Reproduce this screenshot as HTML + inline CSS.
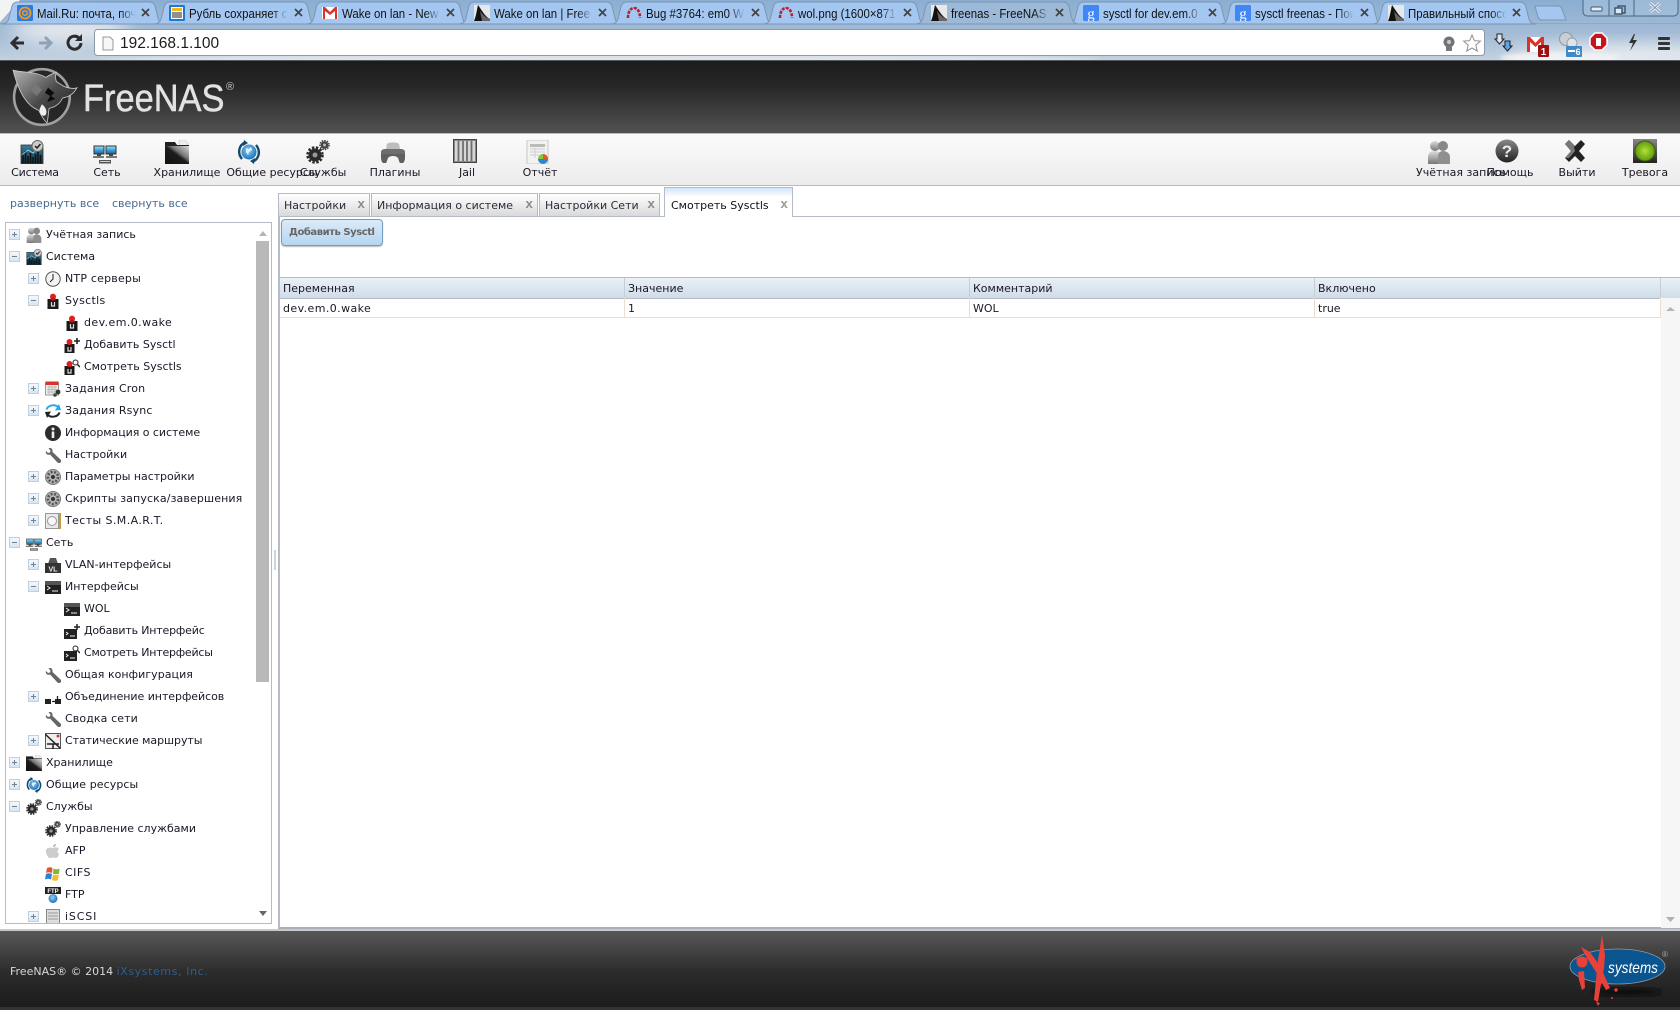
<!DOCTYPE html>
<html><head><meta charset="utf-8"><title>freenas - FreeNAS</title>
<style>
html,body{margin:0;padding:0;width:1680px;height:1010px;overflow:hidden;background:#fff;font-family:"DejaVu Sans","Liberation Sans",sans-serif;font-size:11px;color:#1c1626}
.a{position:absolute}
#hdr{position:absolute;left:0;top:61px;width:1680px;height:72px;background:linear-gradient(#1c1c1c,#272727 35%,#525252)}
#nav{position:absolute;left:0;top:133px;width:1680px;height:51px;background:linear-gradient(#fbfbfb,#ececec);border-top:1px solid #b5bcc7;border-bottom:1px solid #b5bcc7;box-sizing:content-box}
.ti{position:absolute;top:140px;width:24px;height:24px}
.tl{position:absolute;top:166px;line-height:14px;white-space:nowrap;transform:translateX(-50%)}
.t{position:absolute;top:5px;height:16px;font:13px/17px "Liberation Sans",sans-serif;color:#111;width:112px;overflow:hidden;white-space:nowrap;transform:scaleX(.88);transform-origin:0 0;-webkit-mask-image:linear-gradient(90deg,#000 84%,transparent);mask-image:linear-gradient(90deg,#000 84%,transparent)}
.fv{position:absolute;top:5px;width:16px;height:16px}
.cx{position:absolute;top:6px;width:13px;height:13px}
#tree{position:absolute;left:5px;top:222px;width:265px;height:700px;border:1px solid #b5bcc7;overflow:hidden;background:#fff}
.r{position:absolute;left:0;height:22px;line-height:22px;white-space:nowrap}
.r svg{position:absolute;top:3px;width:16px;height:16px}
.r span{position:absolute;top:0}
.r i{position:absolute;top:5px;width:11px;height:11px;box-sizing:border-box;border:1px solid #bfd0e0;background:linear-gradient(#f4f8fc,#d8e5f2)}
.r i:before{content:"";position:absolute;left:2px;top:4px;width:5px;height:1px;background:#6f8294}
.r i.p:after{content:"";position:absolute;left:4px;top:2px;width:1px;height:5px;background:#6f8294}
.l0 i{left:3px}.l0 svg{left:20px}.l0 span{left:40px}
.l1 i{left:22px}.l1 svg{left:39px}.l1 span{left:59px}
.l2 svg{left:58px}.l2 span{left:78px}
.tab{position:absolute;top:193px;height:23px;box-sizing:border-box;border:1px solid #b5bcc7;border-bottom:0;background:linear-gradient(#fff,#d9d9d9);line-height:23px;padding-left:5px;white-space:nowrap;color:#2b2b3a}
.tab b{position:absolute;right:4px;top:0;color:#8a8a8a;font:bold 13px/21px "Liberation Mono",monospace}
.th{position:absolute;top:278px;height:19px;line-height:21px;padding-left:3px;box-sizing:border-box;border-right:1px solid #c5cdd8}
.td{position:absolute;top:298px;height:19px;line-height:21px;padding-left:3px;box-sizing:border-box;border-right:1px solid #eadfce}
</style></head><body>

<svg width="0" height="0" style="position:absolute">
<defs>
<linearGradient id="gd" x1="0" y1="0" x2="0" y2="1"><stop offset="0" stop-color="#888"/><stop offset="1" stop-color="#222"/></linearGradient>
<linearGradient id="gg" x1="0" y1="0" x2="0" y2="1"><stop offset="0" stop-color="#ddd"/><stop offset="1" stop-color="#777"/></linearGradient>
<linearGradient id="gf" x1="0" y1="1" x2="1" y2="0"><stop offset="0" stop-color="#111"/><stop offset=".5" stop-color="#1d1d1d"/><stop offset=".62" stop-color="#777"/><stop offset="1" stop-color="#ddd"/></linearGradient>
<linearGradient id="gs" x1="0" y1="0" x2="0" y2="1"><stop offset="0" stop-color="#3d7d9a"/><stop offset="1" stop-color="#12303f"/></linearGradient>
<linearGradient id="gm" x1="0" y1="0" x2="0" y2="1"><stop offset="0" stop-color="#a5e3f8"/><stop offset=".5" stop-color="#3fa4dc"/><stop offset="1" stop-color="#1a5e90"/></linearGradient>
<linearGradient id="shk" x1="0" y1="0" x2="1" y2="1"><stop offset="0" stop-color="#b5b5b5"/><stop offset=".5" stop-color="#4a4a4a"/><stop offset="1" stop-color="#1c1c1c"/></linearGradient>
<radialGradient id="gb" cx=".45" cy=".4" r=".6"><stop offset="0" stop-color="#8fd0f5"/><stop offset="1" stop-color="#1d70b8"/></radialGradient>
<radialGradient id="ggr" cx=".5" cy=".5" r=".5"><stop offset="0" stop-color="#b4e234"/><stop offset="1" stop-color="#5c9a10"/></radialGradient>
<filter id="bl" x="-30%" y="-60%" width="160%" height="220%"><feGaussianBlur stdDeviation="9"/></filter>
<filter id="b2"><feGaussianBlur stdDeviation="2"/></filter>

<symbol id="sys" viewBox="0 0 24 24"><rect x="1" y="5" width="22" height="19" fill="url(#gs)" stroke="#333" stroke-width=".8"/><path d="M3 23V14M5.500 23V11M8 23V16M10.500 23V13M13 23V17M15.500 23V14M18 23V11M20.500 23V15" stroke="#111" stroke-width="1.500"/><path d="M2 15L8 10l5 3 5-4 4-2" stroke="#9fe0f5" stroke-width=".8" fill="none"/><circle cx="17.500" cy="6" r="5.500" fill="#ccc" stroke="#666"/><path d="M15 6l2 2 3.500-4" stroke="#222" stroke-width="1.500" fill="none"/></symbol>
<symbol id="net" viewBox="0 0 24 24"><rect x="1" y="6" width="10" height="8" fill="url(#gm)" stroke="#333"/><rect x="13" y="6" width="10" height="8" fill="url(#gm)" stroke="#333"/><rect x="4" y="14" width="4" height="2" fill="#444"/><rect x="16" y="14" width="4" height="2" fill="#444"/><rect x="0" y="16" width="11" height="2" fill="#777"/><rect x="13" y="16" width="11" height="2" fill="#777"/><rect x="6" y="20" width="12" height="3.500" fill="#555"/><rect x="7" y="21" width="10" height="1" fill="#ccc"/></symbol>
<symbol id="folder" viewBox="0 0 24 24"><path d="M14 0h6l3 3v6h-9z" fill="#eee" stroke="#bbb" stroke-width=".5"/><path d="M0 2h10l2 3h12v19H0z" fill="#222"/><path d="M0 6h24v18H0z" fill="url(#gf)"/></symbol>
<symbol id="share" viewBox="0 0 24 24"><circle cx="12" cy="12" r="7.500" fill="url(#gb)"/><path d="M9 8l3 1 2-2 1 3-3 2-1 3-2-3z" fill="#dff3fc"/><path d="M5 19C0 13 2 5 8 2.500" fill="none" stroke="#124a6d" stroke-width="2.400"/><path d="M19 5c5 6 3 14-3 16.500" fill="none" stroke="#124a6d" stroke-width="2.400"/><path d="M7 0l4 3-5 3zM17 24l-4-3 5-3z" fill="#124a6d"/></symbol>
<symbol id="gears" viewBox="0 0 24 24"><circle cx="9" cy="15" r="6.500" fill="#2a2a2a"/><circle cx="9" cy="15" r="7.500" fill="none" stroke="#2a2a2a" stroke-width="2.500" stroke-dasharray="2.400 1.600"/><circle cx="9" cy="15" r="2.500" fill="#999"/><circle cx="18.500" cy="5" r="3.800" fill="#444"/><circle cx="18.500" cy="5" r="4.500" fill="none" stroke="#444" stroke-width="1.600" stroke-dasharray="1.500 1.100"/><circle cx="18.500" cy="5" r="1.500" fill="#bbb"/></symbol>
<symbol id="plugin" viewBox="0 0 24 24"><path d="M6 4C7 2 17 2 18 4l1 5H5z" fill="#bdbdbd"/><path d="M0 12c0-3 4-3 5-3h14c1 0 5 0 5 3v3H0z" fill="#6e6e6e"/><path d="M0 14h24v3c0 4-1 5-2 6h-3c-1-1-1-3-2-5-1-1.500-3-2-5-2s-4 .5-5 2c-1 2-1 4-2 5H2c-1-1-2-2-2-6z" fill="#606060"/></symbol>
<symbol id="jail" viewBox="0 0 24 24"><rect x="0.500" y="0.500" width="23" height="23" fill="#888" stroke="#444"/><rect x="2" y="2" width="20" height="20" fill="#d6d6d6"/><path d="M5.500 2v20M10 2v20M14 2v20M18.500 2v20" stroke="#6e6e6e" stroke-width="1.800"/></symbol>
<symbol id="report" viewBox="0 0 24 24"><rect x="1" y="0" width="21" height="24" fill="#f2f2f2" stroke="#c8c8c8"/><rect x="4" y="4" width="15" height="3" fill="#bbb"/><path d="M4 9h15M4 12h15M4 15h9M9 8v10" stroke="#d0d0d0"/><circle cx="17" cy="19" r="5" fill="#2e86cf"/><path d="M17 19V14a5 5 0 0 1 5 5z" fill="#e25c2a"/><path d="M17 19l-5 0a5 5 0 0 1 5-5z" fill="#8fc43a"/></symbol>
<symbol id="user" viewBox="0 0 24 24"><circle cx="8" cy="6" r="5" fill="url(#gg)"/><path d="M1 24v-7c0-4 3-6 7-6s7 2 7 6v7z" fill="url(#gg)"/><circle cx="16" cy="6" r="5" fill="#888"/><path d="M11 24v-7c0-4 2-6 5-6s7 2 7 6v7z" fill="#8f8f8f"/></symbol>
<symbol id="help" viewBox="0 0 24 24"><circle cx="12" cy="12" r="11.500" fill="url(#gd)"/><text x="12" y="18" text-anchor="middle" font-family="Liberation Sans" font-weight="bold" font-size="17" fill="#eee">?</text></symbol>
<symbol id="xx" viewBox="0 0 24 24"><path d="M2 5l4-4 6 6 6-6 4 4-6 7 6 7-4 4-6-6-6 6-4-4 6-7z" fill="#222"/><path d="M2 5l4-4 6 6-1 1 1 4-6 7-4 0 6-7z" fill="#777"/></symbol>
<symbol id="alarm" viewBox="0 0 24 24"><rect x="0" y="0" width="24" height="24" fill="url(#gd)"/><circle cx="12" cy="12" r="10" fill="url(#ggr)" stroke="#3c5a10"/></symbol>
<symbol id="clock" viewBox="0 0 16 16"><circle cx="8" cy="8" r="7.200" fill="#f3f3f3" stroke="#555"/><path d="M8 3v5l-3 3" stroke="#222" fill="none"/></symbol>
<symbol id="sc" viewBox="0 0 16 16"><rect x="2.500" y="6" width="11" height="10" fill="#1a1a1a"/><circle cx="8" cy="3.600" r="3" fill="#e01f1f"/><rect x="5.500" y="5" width="5" height="2.500" fill="#c01515"/><path d="M6.500 9v4h3V9" fill="none" stroke="#ddd" stroke-width="1.200"/></symbol>
<symbol id="scadd" viewBox="0 0 16 16"><rect x="0.500" y="7" width="10" height="9" fill="#1a1a1a"/><circle cx="5.500" cy="5" r="3" fill="#e01f1f"/><path d="M4 10v4h3v-4" fill="none" stroke="#ddd" stroke-width="1.200"/><path d="M13 1v6M10 4h6" stroke="#222" stroke-width="1.600"/></symbol>
<symbol id="scv" viewBox="0 0 16 16"><rect x="0.500" y="7" width="10" height="9" fill="#1a1a1a"/><circle cx="5.500" cy="5" r="3" fill="#e01f1f"/><path d="M4 10v4h3v-4" fill="none" stroke="#ddd" stroke-width="1.200"/><circle cx="11.500" cy="3.500" r="2.500" fill="#fff" stroke="#222"/><path d="M13.500 5.500L16 8" stroke="#222" stroke-width="1.400"/></symbol>
<symbol id="cron" viewBox="0 0 16 16"><rect x="0.500" y="2" width="13" height="12" fill="#eee" stroke="#999"/><rect x="0.500" y="0.500" width="13" height="3.500" fill="#d8342a"/><path d="M2 6h10M2 8.500h10M2 11h10M4 5v8M7 5v8M10 5v8" stroke="#aaa" stroke-width=".7"/><circle cx="13" cy="11" r="2.400" fill="#333"/><circle cx="10" cy="14" r="1.800" fill="#444"/></symbol>
<symbol id="rsync" viewBox="0 0 16 16"><path d="M1.500 6.500C3 2 10 1 13 4" fill="none" stroke="#29a9e8" stroke-width="2"/><path d="M16 7l-6 .5L14 1z" fill="#29a9e8"/><path d="M14.500 9.500C13 14 6 15 3 12" fill="none" stroke="#222" stroke-width="2"/><path d="M0 9l6-.5L2 15z" fill="#222"/></symbol>
<symbol id="info" viewBox="0 0 16 16"><circle cx="8" cy="8" r="8" fill="#2c2c2c"/><circle cx="8" cy="4" r="1.500" fill="#eee"/><rect x="6.700" y="6.500" width="2.600" height="6.500" fill="#eee"/></symbol>
<symbol id="wr" viewBox="0 0 16 16"><path d="M1 4l2 2 2-.5.500-2L3.500 1.500C6 0 8 2 7.500 5L15.500 12.500a2 2 0 0 1-3 3L5 7.500C2.500 8.500 0 6.500 1 4z" fill="#666"/></symbol>
<symbol id="cg" viewBox="0 0 16 16"><circle cx="8" cy="8" r="7.500" fill="#b5b5b5" stroke="#777"/><circle cx="8" cy="8" r="5" fill="none" stroke="#555" stroke-width="2.600" stroke-dasharray="2 1.500"/><circle cx="8" cy="8" r="2" fill="#333"/></symbol>
<symbol id="smart" viewBox="0 0 16 16"><rect x="0.500" y="0.500" width="13" height="15" fill="#e8e8e8" stroke="#999"/><circle cx="7" cy="8" r="4.500" fill="#f8f8f8" stroke="#999"/><rect x="14" y="0" width="2" height="16" fill="#c79a3a"/></symbol>
<symbol id="vlan" viewBox="0 0 16 16"><path d="M3 7l2-6h6l2 6z" fill="#555"/><rect x="0" y="6" width="16" height="10" fill="#333"/><text x="8" y="14.500" text-anchor="middle" font-family="Liberation Sans" font-weight="bold" font-size="7" fill="#eee">VL</text></symbol>
<symbol id="term" viewBox="0 0 16 16"><rect x="0" y="2" width="16" height="13" fill="#222"/><rect x="0" y="2" width="16" height="4" fill="#555"/><path d="M2 7l3 2-3 2M7 12h6" stroke="#eee" fill="none"/></symbol>
<symbol id="tadd" viewBox="0 0 16 16"><rect x="0" y="6" width="13" height="10" fill="#222"/><path d="M2 9l2 1.500-2 1.500M6 13h5" stroke="#eee" fill="none"/><path d="M13 1v6M10 4h6" stroke="#222" stroke-width="1.500"/></symbol>
<symbol id="tv" viewBox="0 0 16 16"><rect x="0" y="6" width="13" height="10" fill="#222"/><path d="M2 9l2 1.500-2 1.500M6 13h5" stroke="#eee" fill="none"/><circle cx="11.500" cy="3.500" r="2.500" fill="#fff" stroke="#222"/><path d="M13.500 5.500L16 8" stroke="#222" stroke-width="1.400"/></symbol>
<symbol id="lagg" viewBox="0 0 16 16"><rect x="0" y="10" width="6" height="5" fill="#222"/><rect x="10" y="10" width="6" height="5" fill="#222"/><path d="M7 12.500h5M12.500 10V7" stroke="#222" stroke-width="1.300" fill="none"/></symbol>
<symbol id="route" viewBox="0 0 16 16"><rect x="0.500" y="0.500" width="15" height="15" fill="#eee" stroke="#555"/><path d="M0 1l15 14M2 11h12M8 11v5" stroke="#222" stroke-width="1.500"/><circle cx="13" cy="3" r="1.500" fill="#d33"/></symbol>
<symbol id="ap" viewBox="0 0 16 16"><path d="M8 5c2-1 5-1 6 1-2 1-2 4 0 5-1 3-2 4-3 4s-2-.5-3-.5-2 .5-3 .5c-2 0-4-4-4-7s3-4 7-3z" fill="#ccc"/><path d="M8 4c0-2 1-3 3-3 0 2-1 3-3 3z" fill="#bbb"/></symbol>
<symbol id="win" viewBox="0 0 16 16"><path d="M2 3c2-1 4-1 5.500 0L7 8C5 7 3 7 1 8z" fill="#e8542a"/><path d="M8.500 3.500c2 1 4 1 6 0L14 8.500c-2 1-4 1-6 0z" fill="#7fb82e"/><path d="M1 9c2-1 4-1 6 0L6 14.500c-2-1-4-1-6 0z" fill="#2a7fd6"/><path d="M8 9.500c2 1 4 1 6 0l-1 5.500c-2 1-4 1-6 0z" fill="#f4bb2a"/></symbol>
<symbol id="ftp" viewBox="0 0 16 16"><rect x="0" y="0" width="16" height="7" fill="#222"/><text x="8" y="6" text-anchor="middle" font-family="Liberation Sans" font-weight="bold" font-size="6" fill="#fff">FTP</text><circle cx="8" cy="11.500" r="4.500" fill="url(#gb)"/></symbol>
<symbol id="isc" viewBox="0 0 16 16"><rect x="1.500" y="0.500" width="13" height="15" fill="#ddd" stroke="#888"/><path d="M3 4h10M3 7h10M3 10h10" stroke="#999"/></symbol>
<symbol id="sh" viewBox="0 0 16 16"><rect width="16" height="16" fill="#e8e8e8"/><path d="M0 16C2 12 3 4 4 0c3 4 7 12 12 14v2z" fill="#111"/><path d="M6 6c2 3 6 7 10 8v2H8z" fill="#666"/></symbol>
<symbol id="red" viewBox="0 0 16 16"><path d="M2 13C2 6 5 3 8 3s6 3 6 10" fill="none" stroke="#b5222a" stroke-width="2.600" stroke-dasharray="3 1.200"/></symbol>
<symbol id="gl" viewBox="0 0 16 16"><rect width="16" height="16" rx="1.500" fill="#4285f4"/><text x="8" y="13.500" text-anchor="middle" font-family="Liberation Serif" font-size="15" fill="#fff">g</text></symbol>
<symbol id="close" viewBox="0 0 13 13"><path d="M3 3l7 7M10 3l-7 7" stroke="#444" stroke-width="1.800"/></symbol>
</defs></svg>

<!-- browser chrome -->
<svg class="a" style="left:0;top:0" width="1680" height="61">
<defs><linearGradient id="sky" x1="0" y1="0" x2="0" y2="1"><stop offset="0" stop-color="#8aaed2"/><stop offset=".6" stop-color="#a6bdd6"/><stop offset="1" stop-color="#c4d2e0"/></linearGradient></defs>
<rect width="1680" height="61" fill="url(#sky)"/>
<ellipse cx="70" cy="30" rx="60" ry="14" fill="#e6e9ee" filter="url(#bl)"/>
<ellipse cx="1620" cy="56" rx="110" ry="10" fill="#eef0f3" filter="url(#bl)"/>
<ellipse cx="1560" cy="58" rx="60" ry="6" fill="#f0f1f3" filter="url(#b2)"/>
<ellipse cx="600" cy="60" rx="500" ry="6" fill="#dfe4ea" filter="url(#b2)"/>
<path d="M0 0h20L0 22z" fill="#f2f3f5"/>
<rect y="23" width="1680" height="1" fill="#7f97ae" opacity=".5"/>
<g fill="#a4c7f2" stroke="#7b95b2">
<path d="M1 24C6 24 8 22 9 18L12 6C13 3 15 2 18 2H149C152 2 154 3 155 6L158 18C159 22 161 24 166 24Z"/>
<path transform="translate(152.300)" d="M1 24C6 24 8 22 9 18L12 6C13 3 15 2 18 2H149C152 2 154 3 155 6L158 18C159 22 161 24 166 24Z"/>
<path transform="translate(304.600)" d="M1 24C6 24 8 22 9 18L12 6C13 3 15 2 18 2H149C152 2 154 3 155 6L158 18C159 22 161 24 166 24Z"/>
<path transform="translate(456.900)" d="M1 24C6 24 8 22 9 18L12 6C13 3 15 2 18 2H149C152 2 154 3 155 6L158 18C159 22 161 24 166 24Z"/>
<path transform="translate(609.200)" d="M1 24C6 24 8 22 9 18L12 6C13 3 15 2 18 2H149C152 2 154 3 155 6L158 18C159 22 161 24 166 24Z"/>
<path transform="translate(761.500)" d="M1 24C6 24 8 22 9 18L12 6C13 3 15 2 18 2H149C152 2 154 3 155 6L158 18C159 22 161 24 166 24Z"/>
<path transform="translate(1066.100)" d="M1 24C6 24 8 22 9 18L12 6C13 3 15 2 18 2H149C152 2 154 3 155 6L158 18C159 22 161 24 166 24Z"/>
<path transform="translate(1218.400)" d="M1 24C6 24 8 22 9 18L12 6C13 3 15 2 18 2H149C152 2 154 3 155 6L158 18C159 22 161 24 166 24Z"/>
<path transform="translate(1370.700)" d="M1 24C6 24 8 22 9 18L12 6C13 3 15 2 18 2H149C152 2 154 3 155 6L158 18C159 22 161 24 166 24Z"/>
<path transform="translate(913.800)" fill="#9db9d8" d="M1 24C6 24 8 22 9 18L12 6C13 3 15 2 18 2H149C152 2 154 3 155 6L158 18C159 22 161 24 166 24Z"/>
<path d="M1535 6h23c2 0 3 1 4 3l4 11h-24c-2 0-3-1-4-3z" fill="#a4c7f2"/>
</g>
<!-- window controls -->
<path d="M1583 0v12c0 2 2 4 4 4h87c2 0 4-2 4-4V0" fill="#a9c2dc" fill-opacity=".55" stroke="#4a6680"/>
<path d="M1609 0v16M1634 0v16" stroke="#4a6680"/>
<rect x="1591" y="7" width="11" height="4" rx="1" fill="#e6eef6" stroke="#3e5a72"/>
<rect x="1618" y="6" width="7" height="7" fill="none" stroke="#3e5a72" stroke-width="1.500"/>
<rect x="1615" y="8" width="7" height="6" fill="#dfe8f0" stroke="#3e5a72" stroke-width="1.500"/>
<path d="M1650 3l10 9M1660 3l-10 9" stroke="#e8eef4" stroke-width="3"/>
<path d="M1650 3l10 9M1660 3l-10 9" stroke="#3e5a72" stroke-width="1" opacity=".6"/>
<!-- omnibox -->
<rect x="94.500" y="29.500" width="1390" height="26" rx="3" fill="#fff" stroke="#8a9aac"/>
<g transform="translate(0 1)">
<!-- nav buttons -->
<path d="M24 42H13M18 36l-6 6 6 6" fill="none" stroke="#2d2d2d" stroke-width="3"/>
<path d="M39 42h11M45 36l6 6-6 6" fill="none" stroke="#8fa3b8" stroke-width="3"/>
<path d="M81 42a6.500 6.500 0 1 1-2-5" fill="none" stroke="#2d2d2d" stroke-width="3"/><path d="M82 33v7h-7z" fill="#2d2d2d"/>
<path d="M103 36h7l3 3v10h-10z" fill="#f7f7f7" stroke="#999"/>
<circle cx="1449" cy="41" r="5.500" fill="#6f7478"/><rect x="1446" y="46" width="6" height="4" fill="#777"/><circle cx="1449" cy="41" r="2" fill="#c8c8c8"/>
<path d="M1472 34l2.400 5.600 6 .5-4.600 4 1.400 6-5.200-3.200-5.200 3.200 1.400-6-4.600-4 6-.5z" fill="#fff" stroke="#8f8f8f"/>
<!-- extension icons -->
<path d="M1497 33h5v5h2l-4.500 5-4.500-5h2z" fill="#dde8f2" stroke="#222"/>
<path d="M1505 40h5v5h2l-4.500 5-4.500-5h2z" fill="#5fa6e0" stroke="#222"/>
<path d="M1527 36h17v15h-17z" fill="#fff"/><path d="M1527 51V36h3l5.500 6 5.500-6h3v15h-3V41l-5.500 5-5.500-5v10z" fill="#d8342a"/>
<rect x="1538" y="44" width="11" height="12" rx="1" fill="#9c0f15"/>
<text x="1543.500" y="54" text-anchor="middle" font-family="Liberation Sans" font-weight="bold" font-size="10" fill="#fff">1</text>
<circle cx="1566" cy="38" r="6.500" fill="#c7ced4" stroke="#8f979e"/><circle cx="1572" cy="42" r="5" fill="#dfe4e8" stroke="#9aa2a9"/>
<rect x="1566" y="45" width="16" height="11" rx="1" fill="#3f8ac8"/><rect x="1568" y="49" width="7" height="2" fill="#fff"/>
<text x="1578" y="54" text-anchor="middle" font-family="Liberation Sans" font-weight="bold" font-size="9" fill="#fff">6</text>
<path d="M1595 32h7l5 5v7l-5 5h-7l-5-5v-7z" fill="#c8151c" stroke="#fff" stroke-width="1.500"/><path d="M1596 37h5v8h-5z" fill="#fff"/>
<path d="M1634 33l-5 9h4l-3 8 7-11h-4l2-6z" fill="#333"/>
<rect x="1658" y="36" width="12" height="3" rx="1" fill="#333"/><rect x="1658" y="41" width="12" height="3" rx="1" fill="#333"/><rect x="1658" y="46" width="12" height="3" rx="1" fill="#333"/>
</g>
<rect y="60" width="1680" height="1" fill="#565a5f"/>
</svg>

<svg class="fv" style="left:17px"><rect width="16" height="16" rx="1.500" fill="#2a7be0"/><circle cx="8" cy="8" r="5.500" fill="none" stroke="#f59a1c" stroke-width="1.800"/><circle cx="8" cy="8" r="2.300" fill="none" stroke="#f59a1c" stroke-width="1.500"/></svg>
<svg class="fv" style="left:169px"><rect width="16" height="16" rx="1.500" fill="#1d78d6"/><rect x="2" y="2" width="12" height="12" fill="#fff"/><rect x="3" y="3" width="10" height="3" fill="#f4b81c"/><path d="M3 8h10M3 10h10M3 12h10" stroke="#222"/></svg>
<svg class="fv" style="left:322px"><rect y="2" width="16" height="12" fill="#fff"/><path d="M1 14V2h2l5 5 5-5h2v12h-2V6L8 10 3 6v8z" fill="#d8342a"/></svg>
<svg class="fv" style="left:474px"><use href="#sh"/></svg>
<svg class="fv" style="left:626px"><use href="#red"/></svg>
<svg class="fv" style="left:778px"><use href="#red"/></svg>
<svg class="fv" style="left:931px"><use href="#sh"/></svg>
<svg class="fv" style="left:1083px"><use href="#gl"/></svg>
<svg class="fv" style="left:1235px"><use href="#gl"/></svg>
<svg class="fv" style="left:1388px"><use href="#sh"/></svg>
<div class="t" style="left:37px">Mail.Ru: почта, почта</div>
<div class="t" style="left:189px">Рубль сохраняет с</div>
<div class="t" style="left:342px">Wake on lan - New</div>
<div class="t" style="left:494px">Wake on lan | Free</div>
<div class="t" style="left:646px">Bug #3764: em0 W</div>
<div class="t" style="left:798px">wol.png (1600×871)</div>
<div class="t" style="left:951px">freenas - FreeNAS - o</div>
<div class="t" style="left:1103px">sysctl for dev.em.0 w</div>
<div class="t" style="left:1255px">sysctl freenas - Поиск</div>
<div class="t" style="left:1408px">Правильный способ</div>
<svg class="cx" style="left:139px"><use href="#close"/></svg>
<svg class="cx" style="left:292px"><use href="#close"/></svg>
<svg class="cx" style="left:444px"><use href="#close"/></svg>
<svg class="cx" style="left:596px"><use href="#close"/></svg>
<svg class="cx" style="left:749px"><use href="#close"/></svg>
<svg class="cx" style="left:901px"><use href="#close"/></svg>
<svg class="cx" style="left:1053px"><use href="#close"/></svg>
<svg class="cx" style="left:1206px"><use href="#close"/></svg>
<svg class="cx" style="left:1358px"><use href="#close"/></svg>
<svg class="cx" style="left:1510px"><use href="#close"/></svg>
<div class="a" style="left:120px;top:33px;font:15.500px/21px 'Liberation Sans',sans-serif;color:#1c1c1c">192.168.1.100</div>

<!-- header -->
<div id="hdr"></div>
<svg class="a" style="left:11px;top:65px" width="68" height="64" viewBox="0 0 66 62">
<circle cx="30" cy="31" r="27" fill="#262626" stroke="#a0a0a0" stroke-width="2.500"/>
<path d="M2 5C14 8 24 6 34 12c4-3 8-4 10-5-1 3-1 6 0 9l8 5c6 2 10 2 12 1-3 6-8 9-14 10-2 5-7 9-13 10-1 6-1 10-2 14-4-3-6-8-8-12C16 40 8 28 2 5z" fill="url(#shk)" stroke="#c8c8c8" stroke-width=".8"/>
<path d="M36 22l6 5-3 3 4 3-8 3 3-6-5-3z" fill="#0c0c0c"/>
<path d="M24 18l6 6-5 6-6-6z" fill="#777"/>
<path d="M30 38c4 3 6 8 3 11-4 1-6-3-5-7z" fill="#efefef"/>
</svg>
<div class="a" style="left:83px;top:76px;font:38px/46px 'Liberation Sans',sans-serif;color:#e2e2e2;-webkit-text-stroke:.5px #e2e2e2;transform:scaleX(.905);transform-origin:0 0;white-space:nowrap">FreeNAS</div>
<div class="a" style="left:226px;top:81px;font:11px/12px 'Liberation Sans',sans-serif;color:#ccc">®</div>

<!-- nav -->
<div id="nav"></div>
<svg class="ti" style="left:20px"><use href="#sys"/></svg>
<svg class="ti" style="left:93px"><use href="#net"/></svg>
<svg class="ti" style="left:165px"><use href="#folder"/></svg>
<svg class="ti" style="left:237px"><use href="#share"/></svg>
<svg class="ti" style="left:306px"><use href="#gears"/></svg>
<svg class="ti" style="left:381px"><use href="#plugin"/></svg>
<svg class="ti" style="left:453px;top:139px"><use href="#jail"/></svg>
<svg class="ti" style="left:526px"><use href="#report"/></svg>
<svg class="ti" style="left:1427px"><use href="#user"/></svg>
<svg class="ti" style="left:1495px;top:139px"><use href="#help"/></svg>
<svg class="ti" style="left:1563px;top:139px"><use href="#xx"/></svg>
<svg class="ti" style="left:1633px;top:139px"><use href="#alarm"/></svg>
<div class="tl" style="left:35px;letter-spacing:-.2px">Система</div>
<div class="tl" style="left:107px">Сеть</div>
<div class="tl" style="left:187px">Хранилище</div>
<div class="tl" style="left:272px">Общие ресурсы</div>
<div class="tl" style="left:323px">Службы</div>
<div class="tl" style="left:395px">Плагины</div>
<div class="tl" style="left:467px">Jail</div>
<div class="tl" style="left:540px">Отчёт</div>
<div class="tl" style="left:1461px">Учётная запись</div>
<div class="tl" style="left:1510px">Помощь</div>
<div class="tl" style="left:1577px">Выйти</div>
<div class="tl" style="left:1645px">Тревога</div>

<div class="a" style="left:10px;top:197px;color:#47698f;line-height:14px">развернуть все</div>
<div class="a" style="left:112px;top:197px;color:#47698f;line-height:14px">свернуть все</div>

<!-- tree -->
<div id="tree">
<div class="r l0" style="top:1px"><i class="p"></i><svg><use href="#user"/></svg><span>Учётная запись</span></div>
<div class="r l0" style="top:23px"><i></i><svg><use href="#sys"/></svg><span>Система</span></div>
<div class="r l1" style="top:45px"><i class="p"></i><svg><use href="#clock"/></svg><span style="letter-spacing:.2px">NTP серверы</span></div>
<div class="r l1" style="top:67px"><i></i><svg><use href="#sc"/></svg><span style="letter-spacing:.3px">Sysctls</span></div>
<div class="r l2" style="top:89px"><svg><use href="#sc"/></svg><span style="letter-spacing:.41px">dev.em.0.wake</span></div>
<div class="r l2" style="top:111px"><svg><use href="#scadd"/></svg><span>Добавить Sysctl</span></div>
<div class="r l2" style="top:133px"><svg><use href="#scv"/></svg><span>Смотреть Sysctls</span></div>
<div class="r l1" style="top:155px"><i class="p"></i><svg><use href="#cron"/></svg><span style="letter-spacing:.17px">Задания Cron</span></div>
<div class="r l1" style="top:177px"><i class="p"></i><svg><use href="#rsync"/></svg><span style="letter-spacing:.16px">Задания Rsync</span></div>
<div class="r l1" style="top:199px"><svg><use href="#info"/></svg><span style="letter-spacing:-.05px">Информация о системе</span></div>
<div class="r l1" style="top:221px"><svg><use href="#wr"/></svg><span>Настройки</span></div>
<div class="r l1" style="top:243px"><i class="p"></i><svg><use href="#cg"/></svg><span style="letter-spacing:-.05px">Параметры настройки</span></div>
<div class="r l1" style="top:265px"><i class="p"></i><svg><use href="#cg"/></svg><span style="letter-spacing:.12px">Скрипты запуска/завершения</span></div>
<div class="r l1" style="top:287px"><i class="p"></i><svg><use href="#smart"/></svg><span style="letter-spacing:.4px">Тесты S.M.A.R.T.</span></div>
<div class="r l0" style="top:309px"><i></i><svg><use href="#net"/></svg><span>Сеть</span></div>
<div class="r l1" style="top:331px"><i class="p"></i><svg><use href="#vlan"/></svg><span>VLAN-интерфейсы</span></div>
<div class="r l1" style="top:353px"><i></i><svg><use href="#term"/></svg><span>Интерфейсы</span></div>
<div class="r l2" style="top:375px"><svg><use href="#term"/></svg><span>WOL</span></div>
<div class="r l2" style="top:397px"><svg><use href="#tadd"/></svg><span style="letter-spacing:-.18px">Добавить Интерфейс</span></div>
<div class="r l2" style="top:419px"><svg><use href="#tv"/></svg><span style="letter-spacing:-.22px">Смотреть Интерфейсы</span></div>
<div class="r l1" style="top:441px"><svg><use href="#wr"/></svg><span style="letter-spacing:.05px">Общая конфигурация</span></div>
<div class="r l1" style="top:463px"><i class="p"></i><svg><use href="#lagg"/></svg><span style="letter-spacing:-.05px">Объединение интерфейсов</span></div>
<div class="r l1" style="top:485px"><svg><use href="#wr"/></svg><span style="letter-spacing:.1px">Сводка сети</span></div>
<div class="r l1" style="top:507px"><i class="p"></i><svg><use href="#route"/></svg><span style="letter-spacing:-.05px">Статические маршруты</span></div>
<div class="r l0" style="top:529px"><i class="p"></i><svg><use href="#folder"/></svg><span>Хранилище</span></div>
<div class="r l0" style="top:551px"><i class="p"></i><svg><use href="#share"/></svg><span style="letter-spacing:.08px">Общие ресурсы</span></div>
<div class="r l0" style="top:573px"><i></i><svg><use href="#gears"/></svg><span>Службы</span></div>
<div class="r l1" style="top:595px"><svg><use href="#gears"/></svg><span>Управление службами</span></div>
<div class="r l1" style="top:617px"><svg><use href="#ap"/></svg><span>AFP</span></div>
<div class="r l1" style="top:639px"><svg><use href="#win"/></svg><span style="letter-spacing:.5px">CIFS</span></div>
<div class="r l1" style="top:661px"><svg><use href="#ftp"/></svg><span>FTP</span></div>
<div class="r l1" style="top:683px"><i class="p"></i><svg><use href="#isc"/></svg><span style="letter-spacing:.85px">iSCSI</span></div>
<div class="a" style="left:250px;top:0;width:15px;height:700px;background:#fff"></div>
<div class="a" style="left:250px;top:18px;width:13px;height:441px;background:#b9b9b9"></div>
<svg class="a" style="left:250px;top:0" width="15" height="700"><path d="M3 13l4-5 4 5z" fill="#b5b5b5"/><path d="M3 688l4 5 4-5z" fill="#666"/></svg>
</div>
<div class="a" style="left:274px;top:550px;width:2px;height:20px;background:#c8d6e4"></div>

<!-- tabs -->
<div class="tab" style="left:278px;width:92px">Настройки<b>x</b></div>
<div class="tab" style="left:371px;width:167px">Информация о системе<b>x</b></div>
<div class="tab" style="left:539px;width:121px">Настройки Сети<b>x</b></div>
<div class="a" style="left:278px;top:216px;width:1402px;height:713px;box-sizing:border-box;border:1px solid #b5bcc7;border-left:2px solid #b5bcc7;border-right:0;border-bottom:2px solid #aab0b8;background:#fff"></div>
<div class="tab" style="left:664px;top:187px;height:30px;width:129px;padding-left:6px;background:linear-gradient(#cfe5fa,#fff 30%);border-bottom:0;line-height:35px;color:#111;z-index:2">Смотреть Sysctls<b style="line-height:34px;color:#999">x</b></div>

<div class="a" style="left:281px;top:219px;width:102px;height:27px;box-sizing:border-box;border:1px solid #769dc0;border-radius:4px;background:linear-gradient(#dcebf8,#b5d5f2);box-shadow:0 1px 1px #bbb;color:#666;font-weight:bold;font-size:10px;letter-spacing:-.45px;line-height:25px;padding-left:7px;white-space:nowrap;overflow:hidden">Добавить Sysctl</div>

<!-- grid -->
<div class="a" style="left:280px;top:277px;width:1400px;height:20px;background:linear-gradient(#eaf1f7,#cfdce8);border-top:1px solid #b5bcc7;border-bottom:1px solid #b5bcc7"></div>
<div class="a" style="left:280px;top:298px;width:1381px;height:19px;border-bottom:1px solid #eadfce"></div>
<div class="th" style="left:280px;width:345px">Переменная</div>
<div class="th" style="left:625px;width:345px">Значение</div>
<div class="th" style="left:970px;width:345px">Комментарий</div>
<div class="th" style="left:1315px;width:346px">Включено</div>
<div class="td" style="left:280px;width:345px;letter-spacing:.41px">dev.em.0.wake</div>
<div class="td" style="left:625px;width:345px">1</div>
<div class="td" style="left:970px;width:345px">WOL</div>
<div class="td" style="left:1315px;width:346px">true</div>
<div class="a" style="left:1661px;top:298px;width:19px;height:630px;background:#f6f6f6"></div>
<svg class="a" style="left:1661px;top:298px" width="19" height="630"><path d="M5 13l4.500-4 4.500 4z" fill="#b5b5b5"/><path d="M5 619l4.500 5 4.500-5z" fill="#b0b0b0"/></svg>

<!-- footer -->
<div class="a" style="left:0;top:929px;width:1680px;height:2px;background:#c8c8c8"></div>
<div class="a" style="left:0;top:931px;width:1680px;height:76px;background:linear-gradient(#585858,#2b2b2b 55%,#1c1c1c)"></div>
<div class="a" style="left:0;top:1007px;width:1680px;height:3px;background:#333"></div>
<div class="a" style="left:10px;top:965px;line-height:14px;color:#d8d8d8;white-space:nowrap">FreeNAS® © 2014 <span style="color:#2c5f93;letter-spacing:.6px">iXsystems, Inc.</span></div>
<svg class="a" style="left:1560px;top:930px" width="120" height="80">
<ellipse cx="67" cy="62" rx="35" ry="4" fill="#0c0c0c" filter="url(#b2)"/>
<ellipse cx="57.500" cy="36.500" rx="47.500" ry="17.500" fill="#0a5590" stroke="#8d9aa6" stroke-width=".8"/>
<text x="48" y="43" font-family="Liberation Sans" font-style="italic" font-size="16" fill="#fff" textLength="50" lengthAdjust="spacingAndGlyphs">systems</text>
<text x="102" y="27" font-family="Liberation Sans" font-size="8" fill="#aaa">®</text>
<g fill="#e8413a">
<path d="M42 5L45 25 44 38 40 60 38 72 34 70 36 50 38 30 40 18Z"/>
<path d="M21 17L30 22 40 36 50 58 46 60 36 42 27 28Z"/>
<circle cx="22" cy="32" r="5.500"/><path d="M16 27l3 2-2 2zM28 27l-3 2 2 2z"/>
<path d="M18 42L24 41 25 58 22 60 19 50Z"/>
<circle cx="56" cy="60" r="1.700"/><circle cx="52" cy="68" r="1"/><path d="M36 72l4 1-2 3z"/>
</g>
</svg>
</body></html>
